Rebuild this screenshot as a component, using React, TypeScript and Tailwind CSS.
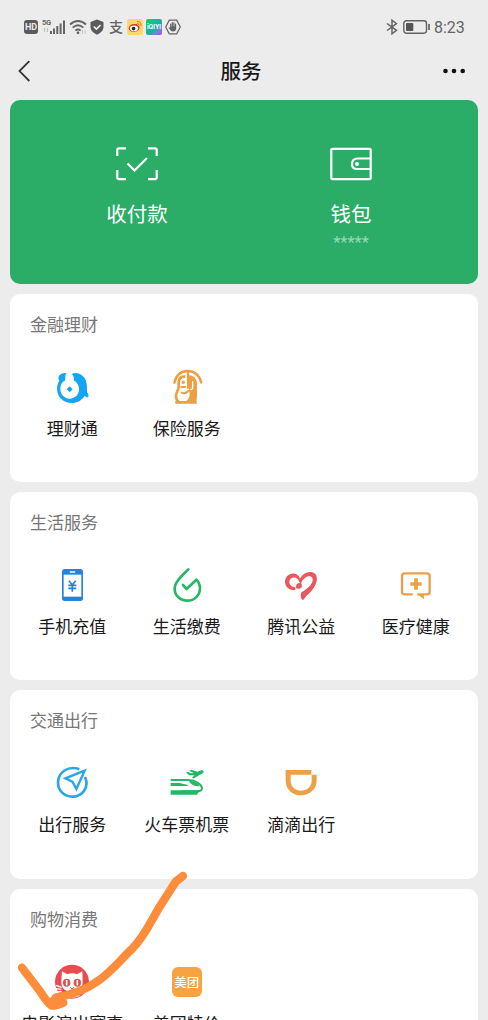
import type { ReactNode } from "react";

interface Service {
	label: string;
	icon: ReactNode;
}

interface Section {
	title: string;
	height: string;
	items: Service[];
}

function Icon({ children }: { children: ReactNode }) {
	return (
		<svg viewBox="0 0 120 120" className="h-10 w-10" fill="none">
			{children}
		</svg>
	);
}

const WealthIcon = () => (
	<Icon>
		<path
			d="M22 38C17 31 18 24 27 18C33 15 38 14 43 15C38 23 42 33 38 38C29 42 25 52 25 64C26 81 38 92 53 92C69 92 81 80 81 64C81 52 75 42 66 38C66 30 65 22 59 18C75 10 94 20 101 36C106 49 105 62 105 73C110 78 111 84 108 88C104 87 100 86 98 83C90 97 76 105 59 105C35 105 15 87 15 62C15 52 18 44 22 38Z"
			fill="#15a5f5"
		/>
		<path d="M53 55L62 64L53 73L44 64Z" fill="#15a5f5" />
	</Icon>
);

const InsuranceIcon = () => (
	<Icon>
		<path d="M22 44C28 20 42 9 62 9C83 9 97 22 103 44" stroke="#ee9f42" strokeWidth="7" strokeLinecap="round" />
		<path d="M63 10V62" stroke="#ee9f42" strokeWidth="6" />
		<path d="M55 25C42 25 35 32 35 43V58C35 65 27 72 27 84C27 92 30 98 35 102" stroke="#ee9f42" strokeWidth="8" />
		<path d="M66 22C82 23 90 34 90 48V83C90 92 87 98 90 107H25V99H58C68 91 70 80 66 68Z" fill="#ee9f42" />
		<path d="M77 39V62L70 66" stroke="white" strokeWidth="4" />
		<circle cx="49" cy="43" r="5" fill="#ee9f42" />
		<path d="M43 57H54M44 74Q54 79 64 69" stroke="#ee9f42" strokeWidth="6" strokeLinecap="round" />
	</Icon>
);

const PhoneIcon = () => (
	<Icon>
		<rect x="30" y="9" width="63" height="96" rx="8" fill="#2583dc" />
		<path d="M35 26H88V92H35Z" fill="white" />
		<path d="M55 18H68" stroke="white" strokeWidth="4" strokeLinecap="round" />
		<path d="M51 44L61 57L71 44M61 57V77M49 58H73M49 67H73" stroke="#2583dc" strokeWidth="5" />
	</Icon>
);

const BillsIcon = () => (
	<Icon>
		<path
			d="M64 10C45 29 23 48 23 68C23 89 40 104 61 104C82 104 99 88 99 67C99 56 95 48 88 41L59 69L48 57"
			stroke="#24b866"
			strokeWidth="8"
			strokeLinecap="round"
			strokeLinejoin="round"
		/>
	</Icon>
);

const CharityIcon = () => (
	<Icon>
		<path
			d="M43 72C25 75 11 62 12 45C14 29 28 20 42 23C51 25 56 32 57 38C63 25 77 17 92 18C105 20 110 34 107 45C103 65 89 78 76 90L66 103C59 99 58 89 60 80C78 70 94 56 95 43C96 34 90 29 82 31C70 35 61 44 60 57C56 50 53 38 44 35C34 32 25 38 25 48C25 58 34 63 43 64Z"
			fill="#e9585c"
		/>
		<path d="M61 53C50 47 42 58 46 67C56 71 67 64 61 53Z" fill="#e9585c" />
	</Icon>
);

const MedicalIcon = () => (
	<Icon>
		<path
			d="M50 85H27Q18 85 18 77V31Q18 22 27 22H92Q101 22 101 31V77Q101 85 92 85H64"
			stroke="#eba04a"
			strokeWidth="7"
		/>
		<path d="M62 84H84V99Z" fill="#eba04a" />
		<path d="M60 37V71M43 54H77" stroke="#eba04a" strokeWidth="11" />
	</Icon>
);

const TravelIcon = () => (
	<Icon>
		<path d="M82 16C49 3 18 25 18 56C18 80 37 98 61 98C91 98 113 70 99 39" stroke="#29a6e5" strokeWidth="8" />
		<path d="M98 20L40 43L62 54L73 75Z" stroke="#29a6e5" strokeWidth="7" strokeLinejoin="miter" />
	</Icon>
);

const TrainIcon = () => (
	<Icon>
		<path d="M11 48H64C86 49 105 61 105 73C105 80 98 82 90 82H44" stroke="#24b866" strokeWidth="6" />
		<path d="M66 51C80 51 92 57 98 66C87 68 73 65 66 51Z" fill="#24b866" />
		<path d="M11 57H36C44 57 49 61 62 62V66H11Z" fill="#24b866" />
		<path d="M11 79H98L90 92H11Z" fill="#24b866" />
		<path d="M57 25L64 24L72 28L80 27L66 20L74 17L91 23L103 19C111 18 112 26 105 29L97 33L82 43L75 42L82 34L66 34Z" fill="#24b866" />
	</Icon>
);

const DidiIcon = () => (
	<Icon>
		<path d="M14 18H91V32H107V51C107 76 84 94 60 94C34 94 14 75 14 50Z" fill="#eda044" />
		<path d="M29 32H92V51C92 69 76 80 60 80C43 80 29 68 29 51Z" fill="white" />
	</Icon>
);

const CatIcon = () => (
	<Icon>
		<circle cx="60" cy="56" r="51" fill="#e94b50" />
		<path
			d="M28 54L30 25L46 34Q61 28 75 34L91 25L92 55C93 74 80 84 76 84L83 99Q60 109 41 99L47 84C34 82 27 69 28 54Z"
			fill="white"
		/>
		<ellipse cx="44" cy="59" rx="11" ry="12" fill="#e94b50" />
		<ellipse cx="76" cy="59" rx="11" ry="12" fill="#e94b50" />
		<path d="M44 53V65M76 53V65" stroke="white" strokeWidth="5" strokeLinecap="round" />
		<path d="M55 73L60 78L66 73M60 78V84" stroke="#e94b50" strokeWidth="3" />
		<path d="M12 67L29 73M11 77L28 79M16 87L29 85M108 67L91 73" stroke="white" strokeWidth="4" />
	</Icon>
);

const MeituanIcon = () => (
	<div className="flex h-10 w-10 items-start justify-center pt-1">
		<div className="flex h-[30px] w-[30px] items-center justify-center rounded-md bg-[#f8a342] text-[12.5px] leading-none font-medium text-white">
			美团
		</div>
	</div>
);

const sections: Section[] = [
	{
		title: "金融理财",
		height: "h-[188px]",
		items: [
			{ label: "理财通", icon: <WealthIcon /> },
			{ label: "保险服务", icon: <InsuranceIcon /> },
		],
	},
	{
		title: "生活服务",
		height: "h-[188px]",
		items: [
			{ label: "手机充值", icon: <PhoneIcon /> },
			{ label: "生活缴费", icon: <BillsIcon /> },
			{ label: "腾讯公益", icon: <CharityIcon /> },
			{ label: "医疗健康", icon: <MedicalIcon /> },
		],
	},
	{
		title: "交通出行",
		height: "h-[189px]",
		items: [
			{ label: "出行服务", icon: <TravelIcon /> },
			{ label: "火车票机票", icon: <TrainIcon /> },
			{ label: "滴滴出行", icon: <DidiIcon /> },
		],
	},
	{
		title: "购物消费",
		height: "h-[188px]",
		items: [
			{ label: "电影演出赛事", icon: <CatIcon /> },
			{ label: "美团特价", icon: <MeituanIcon /> },
		],
	},
];

function StatusBar() {
	return (
		<div className="flex h-[54px] items-center justify-between pr-6 pl-6 text-[#646464]">
			<div className="flex items-center">
				<span className="flex h-[14px] w-[14px] items-center justify-center rounded-[3px] bg-[#5b5b5b] font-['Roboto',sans-serif] text-[9px] leading-none font-bold tracking-tight text-[#ececec]">
					HD
				</span>
				<div className="ml-1 flex h-4 w-[24px] items-start">
					<div className="flex w-[9px] shrink-0 flex-col">
						<span className="font-['Roboto',sans-serif] text-[7.5px] leading-[8px] font-bold tracking-tighter">5G</span>
						<svg viewBox="0 0 8 6" className="h-1.5 w-2" fill="none">
							<path d="M2.5 1v4M5.5 1v4" stroke="#bdbdbd" strokeWidth="1.2" />
						</svg>
					</div>
					<svg viewBox="0 0 16 16" className="-ml-px h-4 w-4 shrink-0">
						<path d="M0 12h2v3H0zM3 9.5h2V15H3zM6.3 7h2v8h-2zM9.6 4.5h2V15h-2zM13 1.5h2V15h-2z" fill="currentColor" />
					</svg>
				</div>
				<svg viewBox="0 0 18 16" className="ml-[3px] h-4 w-[18px]" fill="none">
					<path d="M1 5.5Q9-1.5 17 5.5M3.6 8.6Q9 4 14.4 8.6M6.3 11.6Q9 9.5 11.7 11.6" stroke="currentColor" strokeWidth="1.8" />
					<circle cx="9" cy="13.8" r="1.4" fill="currentColor" />
					<path d="M13.5 11v4M16 11v4" stroke="#c8c8c8" />
				</svg>
				<svg viewBox="0 0 14 16" className="ml-[3px] h-4 w-[14px]" fill="none">
					<path d="M7 .5L13.5 3V8.5Q13 13 7 15.7Q1 13 .5 8.5V3Z" fill="#5b5b5b" />
					<path d="M3.8 7.5L6.4 10L10.5 6" stroke="#ececec" strokeWidth="1.7" />
				</svg>
				<span className="-mt-0.5 ml-[5px] text-[14px] leading-4 font-medium">支</span>
				<svg viewBox="0 0 16 16" className="ml-1 h-4 w-4" fill="none">
					<rect width="16" height="16" rx="2.5" fill="#ffd66c" />
					<path d="M1.7 9.4C2 6.6 5.4 4.6 8 5.2C10 4.4 10.6 5.2 10.5 6.5C13 7.1 12.9 8.5 12 10.5C9.8 14 2 13.3 1.7 9.4Z" fill="#d93330" />
					<ellipse cx="7" cy="9.4" rx="4" ry="2.8" fill="white" />
					<circle cx="6.6" cy="9.6" r="1.8" fill="#222" />
					<path d="M10 2.5Q14.5 2.3 14 7M10.2 4.5Q12.4 4.4 12.2 6.6" stroke="#ed7728" />
				</svg>
				<span className="ml-[3px] flex h-4 w-4 items-center justify-center rounded-[2px] bg-linear-to-br from-[#00d957] via-[#25a6ac] via-60% to-[#a52dff] font-['Inter',sans-serif] text-[6px] leading-none font-bold text-white">
					iQIYI
				</span>
				<svg viewBox="0 0 16 16" className="ml-[3px] h-4 w-4" fill="none">
					<path d="M4.3 1.2H11.7L15.3 8L11.7 14.8H4.3L.7 8Z" stroke="currentColor" strokeWidth="1.2" />
					<path d="M5.7 9V5M7.3 8V3.6M8.9 8V3.9M10.5 9V5.2" stroke="currentColor" strokeWidth="1.2" strokeLinecap="round" />
					<path d="M5.1 7.5H11.1V10.3Q10.5 12.6 8.3 12.6Q6.4 12.6 5.3 11L3.5 8.8L4.5 8.3L5.2 9Z" fill="currentColor" />
				</svg>
			</div>
			<div className="flex items-center">
				<svg viewBox="0 0 12 16" className="h-4 w-3" fill="none">
					<path d="M1 4.5L10.5 11.3L6 14.8V1.2L10.5 4.7L1 11.5" stroke="currentColor" strokeWidth="1.5" />
				</svg>
				<svg viewBox="0 0 28 14" className="ml-[5px] h-[14px] w-7" fill="none">
					<rect x=".8" y=".8" width="22.7" height="12.4" rx="2.6" stroke="currentColor" strokeWidth="1.4" />
					<rect x="3" y="3" width="7.3" height="8" rx="1" fill="#555" />
					<path d="M26 4v6" stroke="currentColor" strokeWidth="1.7" />
				</svg>
				<span className="mt-px ml-[3px] w-[30px] font-['Roboto',sans-serif] text-[16px] leading-5 whitespace-nowrap">8:23</span>
			</div>
		</div>
	);
}

function NavBar() {
	return (
		<div className="flex h-[46px] items-center justify-between pr-[22px] pb-3 pl-[18px]">
			<svg viewBox="0 0 13 22" className="h-[22px] w-[13px]" fill="none">
				<path d="M11.3 1.2L1.5 11.1L11.3 21" stroke="#333" strokeWidth="1.8" />
			</svg>
			<h1 className="-mt-0.5 ml-[9px] text-[20.5px] leading-6 font-medium text-[#191919]">服务</h1>
			<svg viewBox="0 0 24 6" className="h-[6px] w-6" fill="#111">
				<circle cx="3.5" cy="3" r="2.3" />
				<circle cx="12" cy="3" r="2.3" />
				<circle cx="20.7" cy="3" r="2.3" />
			</svg>
		</div>
	);
}

function PayCard() {
	return (
		<div className="grid h-[184px] grid-cols-2 rounded-[10px] bg-[#2bad67] px-5 pt-[46px] text-white">
			<div className="flex flex-col items-center">
				<svg viewBox="0 0 42 36" className="h-9 w-[42px]" fill="none" stroke="white" strokeWidth="2.2">
					<path d="M1.3 10V4Q1.3 2.3 3 2.3H10M32 2.3H39Q40.7 2.3 40.7 4V10M1.3 24V31.5Q1.3 33.2 3 33.2H10M32 33.2H39Q40.7 33.2 40.7 31.5V24" />
					<path d="M11.5 17.5L18.5 24.5L31 12" />
				</svg>
				<span className="mt-[17px] text-[20.5px] leading-7">收付款</span>
			</div>
			<div className="flex flex-col items-center">
				<svg viewBox="0 0 42 36" className="h-9 w-[42px]" fill="none" stroke="white" strokeWidth="2.2">
					<rect x="1.3" y="2.8" width="39.4" height="30.4" rx="1.2" />
					<path d="M40.5 12.5H27Q22 13 22 18Q22 23 27 23H40.5" />
					<circle cx="27" cy="18" r="2" fill="white" stroke="none" />
				</svg>
				<span className="mt-[17px] text-[20.5px] leading-7">钱包</span>
				<span className="mt-1.5 font-['Roboto',sans-serif] text-[16.5px] leading-5 text-[#9bd8b5]">*****</span>
			</div>
		</div>
	);
}

function SectionCard({ title, height, items }: Section) {
	return (
		<section className={`${height} shrink-0 rounded-[10px] bg-white px-[5px] pt-[18px]`}>
			<h2 className="ml-[15px] text-[17px] leading-6 text-[#777]">{title}</h2>
			<div className="mt-8 grid grid-cols-4">
				{items.map((item) => (
					<div key={item.label} className="flex flex-col items-center">
						{item.icon}
						<span className="mt-2 text-[17px] leading-6 whitespace-nowrap text-[#1a1a1a]">{item.label}</span>
					</div>
				))}
			</div>
		</section>
	);
}

export default function App() {
	return (
		<div className="relative h-[1020px] w-[488px] overflow-hidden bg-[#ececec] font-['Noto_Sans_CJK_SC',sans-serif]">
			<StatusBar />
			<NavBar />
			<main className="flex flex-col gap-[10px] px-[10px]">
				<PayCard />
				{sections.map((section) => (
					<SectionCard key={section.title} {...section} />
				))}
			</main>
			{/* hand-drawn check mark over the last card */}
			<svg
				viewBox="0 0 720 480"
				className="absolute bottom-0 left-0 h-40 w-60"
				fill="none"
				stroke="#fd8d3b"
				strokeWidth="25"
				strokeLinecap="round"
				strokeLinejoin="round"
			>
				<path d="M66 323L119 392Q144 431 155 437Q167 438 190 428" />
				<path d="M167 413C208 407 258 388 286 368C330 341 360 300 397 266C435 227 451 187 476 145L528 64L549 48" />
				<path d="M160 422L180 420" />
			</svg>
		</div>
	);
}
